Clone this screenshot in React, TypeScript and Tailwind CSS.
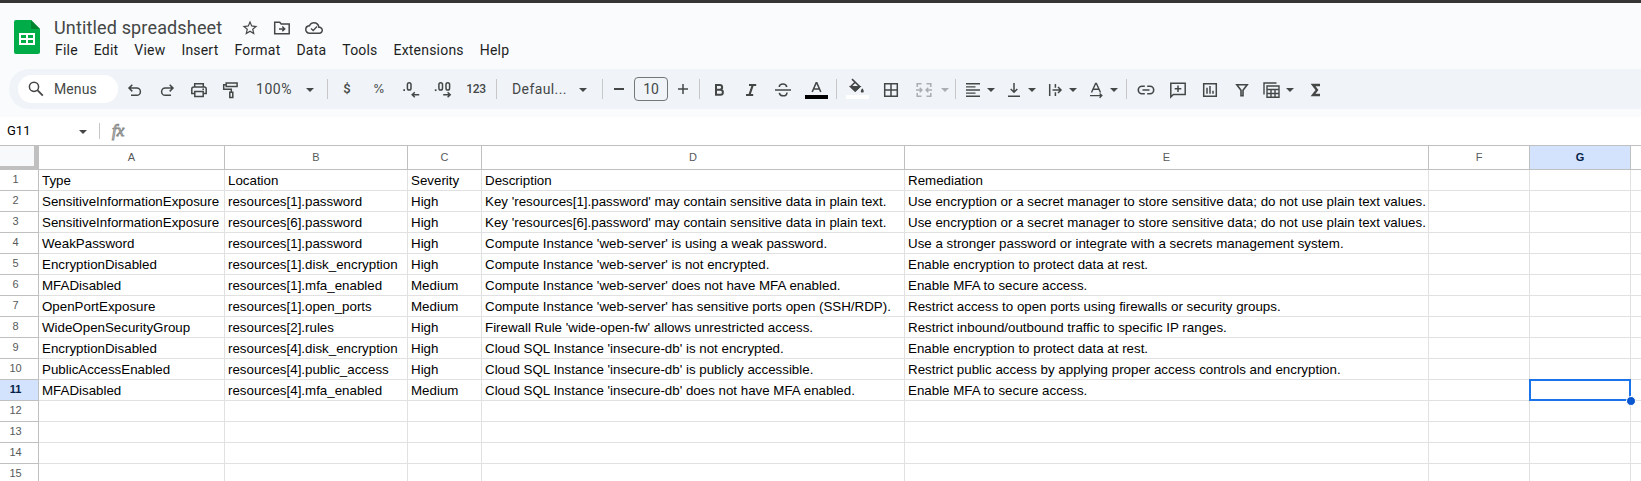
import React from "react";
import { MdStarOutline, MdCloudQueue } from "react-icons/md";

const COLS = [
  { n: "A", w: "w-[186px]" },
  { n: "B", w: "w-[183px]" },
  { n: "C", w: "w-[74px]" },
  { n: "D", w: "w-[423px]" },
  { n: "E", w: "w-[524px]" },
  { n: "F", w: "w-[101px]" },
  { n: "G", w: "w-[101px]" },
  { n: "", w: "w-[20px]" },
];

const USE_ENC = "Use encryption or a secret manager to store sensitive data; do not use plain text values.";
const ROWS: string[][] = [
  ["Type", "Location", "Severity", "Description", "Remediation"],
  ["SensitiveInformationExposure", "resources[1].password", "High", "Key 'resources[1].password' may contain sensitive data in plain text.", USE_ENC],
  ["SensitiveInformationExposure", "resources[6].password", "High", "Key 'resources[6].password' may contain sensitive data in plain text.", USE_ENC],
  ["WeakPassword", "resources[1].password", "High", "Compute Instance 'web-server' is using a weak password.", "Use a stronger password or integrate with a secrets management system."],
  ["EncryptionDisabled", "resources[1].disk_encryption", "High", "Compute Instance 'web-server' is not encrypted.", "Enable encryption to protect data at rest."],
  ["MFADisabled", "resources[1].mfa_enabled", "Medium", "Compute Instance 'web-server' does not have MFA enabled.", "Enable MFA to secure access."],
  ["OpenPortExposure", "resources[1].open_ports", "Medium", "Compute Instance 'web-server' has sensitive ports open (SSH/RDP).", "Restrict access to open ports using firewalls or security groups."],
  ["WideOpenSecurityGroup", "resources[2].rules", "High", "Firewall Rule 'wide-open-fw' allows unrestricted access.", "Restrict inbound/outbound traffic to specific IP ranges."],
  ["EncryptionDisabled", "resources[4].disk_encryption", "High", "Cloud SQL Instance 'insecure-db' is not encrypted.", "Enable encryption to protect data at rest."],
  ["PublicAccessEnabled", "resources[4].public_access", "High", "Cloud SQL Instance 'insecure-db' is publicly accessible.", "Restrict public access by applying proper access controls and encryption."],
  ["MFADisabled", "resources[4].mfa_enabled", "Medium", "Cloud SQL Instance 'insecure-db' does not have MFA enabled.", "Enable MFA to secure access."],
  [], [], [], [],
];

/* Fixed-width toolbar slot that centres its content. */
function Slot({ w, children, className = "" }: { w: string; children?: React.ReactNode; className?: string }) {
  return <div className={`flex h-10 shrink-0 items-center justify-center ${w} ${className}`}>{children}</div>;
}

/* 18px line icon on an 18-unit grid. */
function Ico({ children, className = "mt-[2px]" }: { children: React.ReactNode; className?: string }) {
  return (
    <svg viewBox="0 0 18 18" className={`size-[18px] shrink-0 overflow-visible ${className}`} fill="none" stroke="currentColor" strokeWidth="1.5">
      {children}
    </svg>
  );
}

function Caret({ w, className = "" }: { w: string; className?: string }) {
  return (
    <Slot w={w} className={className}>
      <svg viewBox="0 0 8 4" className="mt-px h-1 w-2" fill="currentColor"><path d="M0 0h8L4 4z" /></svg>
    </Slot>
  );
}

function Divider() {
  return <div className="h-5 w-px shrink-0 bg-[#c7c7c7]" />;
}

function Toolbar() {
  return (
    <div className="ml-[9px] flex h-10 items-center rounded-l-full bg-[#f0f4f9] pl-[9px] text-[#444746]">
      <div className="flex h-7 w-[100px] shrink-0 items-center rounded-full bg-white pl-[9px]">
        <Ico className=""><circle cx="7" cy="6.8" r="4.6" /><path d="M10.4 10.2l5.4 5.4" strokeWidth="1.8" /></Ico>
        <span className="ml-[9px] text-[14px] tracking-[0.1px]">Menus</span>
      </div>
      <Slot w="w-[34px]">
        <Ico><path d="M6.3 3.8L3 7.1l3.3 3.3M3.3 7.1h7.5a3.6 3.6 0 0 1 0 7.2H5" /></Ico>
      </Slot>
      <Slot w="w-[30px]">
        <Ico><path d="M11.7 3.8L15 7.1l-3.3 3.3M14.7 7.1H7.2a3.6 3.6 0 0 0 0 7.2H13" /></Ico>
      </Slot>
      <Slot w="w-[34px]">
        <Ico>
          <path d="M4.7 5.8V2.7h8.6v3.1M4.700 12.600H1.800V8q0-2 2-2h10.400q2 0 2 2v4.600h-2.900" />
          <path d="M4.800 10.600h8.400v5H4.800z" /><path d="M12.400 8.300h1.600" />
        </Ico>
      </Slot>
      <Slot w="w-[29px]">
        <Ico><path d="M4.200 2h10.900v3.400H4.200zM4.200 3.700H1.700v4.600h7.600v3M7.800 11.300h3v5.200h-3z" /></Ico>
      </Slot>
      <Slot w="w-[58px]" className="text-[14px] tracking-[0.5px]">100%</Slot>
      <Caret w="w-[14px]" />
      <Slot w="w-[10px]" />
      <Divider />
      <Slot w="w-[38px]" className="text-[13px] font-medium">$</Slot>
      <Slot w="w-[26px]" className="font-[Inter,sans-serif] text-[12px]">%</Slot>
      <Slot w="w-[38px]">
        <Ico>
          <path d="M1.300 9.200H3" strokeWidth="1.800" /><rect x="5.400" y="1.700" width="3.600" height="7.400" rx="1.800" /><path d="M17.200 13.700h-6.500M12.800 11.200l-2.600 2.500 2.600 2.500" />
        </Ico>
      </Slot>
      <Slot w="w-[26px]">
        <Ico>
          <path d="M.8 9.200h1.700" strokeWidth="1.800" /><rect x="4.900" y="1.700" width="3.600" height="7.400" rx="1.800" /><rect x="12" y="1.700" width="3.600" height="7.400" rx="1.800" /><path d="M9.200 13.700h6.800M13.600 11.200l2.600 2.500-2.600 2.500" />
        </Ico>
      </Slot>
      <Slot w="w-[40px]" className="text-[12px] font-medium tracking-[-0.3px]">123</Slot>
      <Divider />
      <Slot w="w-[15px]" />
      <Slot w="w-[56px]" className="justify-start! text-[14px] tracking-[0.400px]">Defaul...</Slot>
      <Caret w="w-[30px]" />
      <Slot w="w-[4px]" />
      <Divider />
      <Slot w="w-[31px]"><div className="h-[1.5px] w-[10px] bg-current" /></Slot>
      <div className="flex h-6 w-[34px] shrink-0 items-center justify-center rounded border border-[#747775] text-[14px]">10</div>
      <Slot w="w-[31px]"><Ico className="-ml-px"><path d="M9 4v10M4 9h10" /></Ico></Slot>
      <Divider />
      <Slot w="w-[38px]"><Ico className="mt-px"><path d="M6 4h3.800a2.300 2.300 0 0 1 0 4.700H6zM6 8.700h4.400a2.500 2.500 0 0 1 0 5H6z" strokeWidth="2" /></Ico></Slot>
      <Slot w="w-[26px]"><Ico><path d="M7 4h7.200M4 14h7.200M10.800 4L7.400 14" strokeWidth="2.200" /></Ico></Slot>
      <Slot w="w-[38px]"><Ico className="mt-px"><path d="M1 9h16M12.800 6Q12.200 3 9 3 5.400 3 5.300 6M5.300 11.800q.5 3 3.800 3 3.800 0 3.900-3.400" strokeWidth="1.600" /></Ico></Slot>
      <Slot w="w-[29px]">
        <svg viewBox="0 0 23 18" className="mt-[2px] h-[18px] w-[23px] shrink-0 overflow-visible" fill="none" stroke="currentColor" strokeWidth="1.600">
          <path d="M7.200 11l4-9.300h.6l4 9.300M8.600 8h5.800" /><path d="M0 16h23" stroke="#000" strokeWidth="4" />
        </svg>
      </Slot>
      <Slot w="w-[5px]" />
      <Divider />
      <Slot w="w-[41px]">
        <svg viewBox="0 0 23 18" className="mt-[2px] h-[18px] w-[23px] shrink-0 overflow-visible" fill="none" stroke="currentColor" strokeWidth="1.600">
          <path d="M0 16h23" stroke="#fff" strokeWidth="4" />
          <path d="M6-1.800l7.600 7.300-4.400 4.300-4.400-4.300L9.100 1.300" />
          <path d="M4.800 5.800h8.800l-4.400 4.200z" fill="currentColor" />
          <path d="M16.300 7.200c-2.400 3.200-1.500 4.400 0 4.400s2.400-1.200 0-4.400z" fill="currentColor" stroke="none" />
        </svg>
      </Slot>
      <Slot w="w-[26px]"><Ico><path d="M2.700 2.700h12.600v12.600H2.700zM9 2.700v12.600M2.700 9h12.600" /></Ico></Slot>
      <Slot w="w-[40px]" className="opacity-40">
        <Ico><path d="M6.500 2.700H2.200V6M11.500 2.700h4.300V6M6.500 15.300H2.200V12M11.500 15.300h4.300V12M1 9h5.500M17 9h-5.500M4.700 6.800L6.900 9l-2.200 2.200M13.300 6.800L11.100 9l2.200 2.200" /></Ico>
      </Slot>
      <Caret w="w-[8px]" className="-ml-[3px] opacity-40" />
      <Slot w="w-[6px]" />
      <Divider />
      <Slot w="w-[34px]"><Ico><path d="M2 2.700h14M2 5.850h9.500M2 9h14M2 12.150h9.500M2 15.300h14" strokeWidth="1.400" /></Ico></Slot>
      <Caret w="w-[8px]" className="-ml-[3px]" />
      <Slot w="w-[38px]"><Ico><path d="M9 2v9.300M5.700 8L9 11.300 12.300 8M3 15.200h12" /></Ico></Slot>
      <Caret w="w-[8px]" className="-ml-[5px]" />
      <Slot w="w-[38px]"><Ico><path d="M3.700 3v12M9.400 3v3.800M9.400 11.200V15M6.500 9h8M12 6l3 3-3 3" /></Ico></Slot>
      <Caret w="w-[8px]" className="-ml-[5px]" />
      <Slot w="w-[38px]"><Ico><path d="M4.500 11.500L8.600 2.500h.8l4.100 9M6 8.300h6M3 14.600h11.500M12.600 12.500l2.200 2.100-2.200 2.100" strokeWidth="1.400" /></Ico></Slot>
      <Caret w="w-[8px]" className="-ml-[5px]" />
      <Slot w="w-[8px]" />
      <Divider />
      <Slot w="w-[38px]"><Ico><path d="M7.800 5.300H5a3.700 3.700 0 0 0 0 7.400h2.800M10.200 5.300H13a3.700 3.700 0 0 1 0 7.400h-2.800M5.500 9h7" strokeWidth="1.600" /></Ico></Slot>
      <Slot w="w-[26px]"><Ico><path d="M1.800 16V2.200h14.400v11.200H4.400zM9 4.500v6.600M5.700 7.800h6.600" /></Ico></Slot>
      <Slot w="w-[38px]"><Ico><path d="M2.700 2.700h12.600v12.600H2.700zM6 6.800v6M9 5v7.800M12 9.800v3" /></Ico></Slot>
      <Slot w="w-[26px]"><Ico><path d="M3.800 3.700h10.400L10 9.300v5.400H8V9.300z" strokeWidth="1.600" /></Ico></Slot>
      <Slot w="w-[34px]"><Ico><path d="M1 13.500V2h12.500M4 5h12v11.300H4zM4 8.500h12M4 12.500h12M8 8.500v7.800M12 8.500v7.800" strokeWidth="1.400" /></Ico></Slot>
      <Caret w="w-[8px]" className="-ml-[3px]" />
      <Slot w="w-[44px]"><Ico><path d="M13 4H6l4 5-4 5h7" strokeWidth="2.300" /></Ico></Slot>
    </div>
  );
}

function Header() {
  return (
    <div className="flex h-[66px] items-start pt-[17px] pl-[14px]">
      <svg viewBox="0 0 26 34" className="h-[34px] w-[26px] shrink-0">
        <path d="M2 0h15l9 9v23a2 2 0 0 1-2 2H2a2 2 0 0 1-2-2V2a2 2 0 0 1 2-2z" fill="#00ac47" />
        <path d="M17 0l9 9h-9z" fill="#00832d" />
        <path d="M5 13h16v12H5zM7 15v3h5v-3zm7 0v3h5v-3zM7 20v3h5v-3zm7 0v3h5v-3z" fill="#fff" fillRule="evenodd" />
      </svg>
      <div className="-mt-[6px] ml-[14px]">
        <div className="flex h-[26px] items-center text-[#444746]">
          <span className="w-[169px] text-[18px] tracking-[0.150px] whitespace-nowrap">Untitled spreadsheet</span>
          <MdStarOutline className="mt-[2px] ml-[18px] size-[18px]" />
          <Ico className="mt-[2px] ml-[14px]"><path d="M1.700 3.200h5l1.500 1.800h8v9.800H1.700zM6 9.900h5.500M9.300 7.500l2.400 2.400-2.400 2.400" /></Ico>
          <span className="mt-[2px] ml-[14px] grid size-[18px] *:col-start-1 *:row-start-1">
            <MdCloudQueue className="size-[18px]" />
            <Ico className=""><path d="M6 9.500l2.200 2 3.800-4" strokeWidth="1.300" /></Ico>
          </span>
        </div>
        <div className="flex h-5 items-center gap-[16px] pl-px text-[14px] tracking-[0.200px] text-[#1f1f1f]">
          {["File", "Edit", "View", "Insert", "Format", "Data", "Tools", "Extensions", "Help"].map((m) => <span key={m}>{m}</span>)}
        </div>
      </div>
    </div>
  );
}

function Grid() {
  return (
    <div className="font-['Liberation_Sans',Arial,sans-serif]">
      <div className="flex h-[25px] border-t border-b border-[#c0c0c0] text-[11px] text-[#575a5a]">
        <div className="h-[24px] w-[39px] shrink-0 border-r-[5px] border-b-[4px] border-[#c0c0c0] bg-[#f8f9fa]" />
        {COLS.map((c, i) => (
          <div key={i} className={`flex shrink-0 items-center justify-center border-r border-[#c0c0c0] ${c.w} ${c.n === "G" ? "bg-[#d3e3fd] font-bold text-[#041e49]" : ""}`}>{c.n}</div>
        ))}
      </div>
      {ROWS.map((r, ri) => (
        <div key={ri} className="flex h-[21px]">
          <div className={`flex w-[39px] shrink-0 justify-center border-r border-b border-[#c0c0c0] pt-[1px] pr-[7px] text-[11px] leading-4 ${ri === 10 ? "bg-[#d3e3fd] font-bold text-[#041e49]" : "text-[#575a5a]"}`}>{ri + 1}</div>
          {COLS.map((c, ci) => (
            <div key={ci} className={`flex shrink-0 items-center border-r border-b border-[#e1e1e1] pt-px pl-[3px] text-[13.333px] whitespace-nowrap text-black ${c.w} ${ri === 10 && ci === 6 ? "relative z-10" : ""}`}>
              {r[ci]}
              {ri === 10 && ci === 6 && (
                <div className="absolute -top-px -right-px -bottom-px -left-px border-2 border-[#1a73e8]">
                  <div className="absolute -right-[7px] -bottom-[7px] size-[10px] rounded-full border border-white bg-[#0b57d0]" />
                </div>
              )}
            </div>
          ))}
        </div>
      ))}
    </div>
  );
}

export default function App() {
  return (
    <div className="h-[481px] w-full overflow-hidden bg-white font-[Roboto,sans-serif]">
      <div className="h-[117px] bg-[#f9fbfd]">
        <div className="h-[3px] bg-[#353535]" />
        <Header />
        <Toolbar />
      </div>
      <div className="flex h-[28px] items-center text-[#444746]">
        <span className="w-[72px] pl-[7px] text-[13px] text-black">G11</span>
        <Caret w="w-[22px]" />
        <div className="ml-[5px] h-4 w-px bg-[#c7c7c7]" />
        <span className="ml-[12px] font-['Liberation_Serif',serif] text-[17px] text-white italic [-webkit-text-stroke:1px_#8a8c8b]">fx</span>
      </div>
      <Grid />
    </div>
  );
}
